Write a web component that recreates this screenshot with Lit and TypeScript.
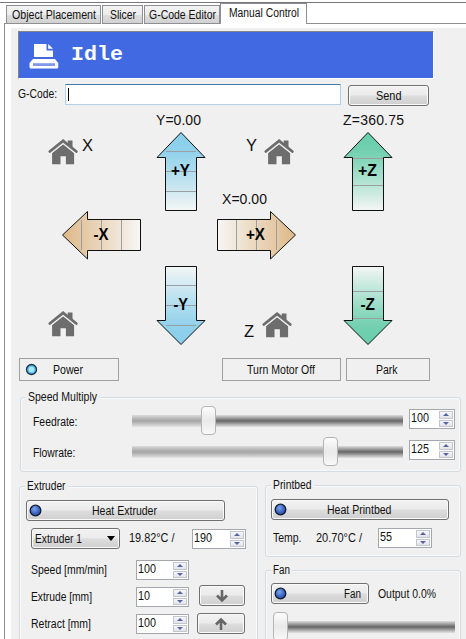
import { LitElement, html, css, svg } from "lit";
import { customElement, property } from "lit/decorators.js";
import { styleMap } from "lit/directives/style-map.js";

/** A one-line caption fitted to the given width. */
const label = (text: string, width: number, cls = "") => html`
  <svg class="label ${cls}" width=${width} height="14">
    <text x="0" y="11" textLength=${width} lengthAdjust="spacingAndGlyphs">${text}</text>
  </svg>`;

const labelStyles = css`
  .label { display: block; flex: none; overflow: visible; }
  .label text { font: 12px "Liberation Sans", Arial, sans-serif; fill: #111; }
`;

@customElement("spin-box")
class SpinBox extends LitElement {
  @property() value = "";
  @property({ type: Number }) textWidth = 18;
  static styles = [labelStyles, css`
    :host { display: flex; box-sizing: border-box; flex: none; height: 20px; width: 54px; border: 1px solid #a4a7ad; background: #fff; padding: 1px; justify-content: space-between; }
    .steps { display: flex; flex-direction: column; gap: 1px; width: 14px; }
    .step { flex: 1; border: 1px solid #c3c6cf; box-sizing: border-box; background: linear-gradient(#f7f7f9, #e2e3e8); display: flex; align-items: center; justify-content: center; }
    .step svg { display: block; }
  `];
  render() {
    return html`${label(this.value, this.textWidth)}
      <div class="steps">
        <div class="step"><svg width="6" height="3"><path d="M0 3L3 0L6 3Z" fill="#5563a0"/></svg></div>
        <div class="step"><svg width="6" height="3"><path d="M0 0L3 3L6 0Z" fill="#5563a0"/></svg></div>
      </div>`;
  }
}

@customElement("track-bar")
class TrackBar extends LitElement {
  @property({ type: Number }) pos = 0;
  static styles = css`
    :host { display: block; position: relative; height: 30px; flex: none; box-sizing: border-box; padding-top: 9px; }
    .track { height: 12px; background: linear-gradient(#dedede, #a0a0a0 25%, #686868 48%, #808080 60%, #b4b4b4 80%, #e2e2e2); }
    .done { height: 12px; background: linear-gradient(#dcdcdc, #bcbcbc 25%, #a6a6a6 48%, #b0b0b0 60%, #cacaca 80%, #e4e4e4); }
    .thumb { position: absolute; top: 0; width: 15px; height: 29px; box-sizing: border-box; border: 1px solid #b4b4b4; border-radius: 4px; background: linear-gradient(#fdfdfd, #e9e9e9 50%, #f8f8f8); }
  `;
  render() {
    return html`<div class="track"><div class="done" style=${styleMap({ width: `${this.pos}px` })}></div></div>
      <div class="thumb" style=${styleMap({ left: `${this.pos}px` })}></div>`;
  }
}

const led = html`<svg class="led" width="13" height="13"><defs><radialGradient id="g" cx=".4" cy=".35" r=".7"><stop offset="0" stop-color="#7ba4ea"/><stop offset=".6" stop-color="#3d68c0"/><stop offset="1" stop-color="#2b4a94"/></radialGradient></defs><circle cx="6.5" cy="6.5" r="5.3" fill="url(#g)" stroke="#111a33" stroke-width="1.3"/></svg>`;

const home = (x: number, y: number) => svg`
  <g transform="translate(${x} ${y})" class="home">
    <path d="M3.8 13.6L14.8 4.8L25.8 13.6V25H17.6V17H12.2V25H3.8Z"/>
    <path d="M1.5 12.2L14.8 1.6L28 12.2" class="eave"/>
    <path d="M19.4 1.2H24.2V9L19.4 5.4Z"/>
    <path d="M1.5 12.2L14.8 1.6L28 12.2" class="roof"/>
  </g>`;

const arrow = (d: string, fill: string, lines: string, text: string, x: number, y: number, w: number) => svg`
  <path d=${d} fill="url(#${fill})" stroke="#111"/>
  <path d=${lines} stroke="#999fa2" fill="none"/>
  <text class="dir" x=${x} y=${y} textLength=${w} lengthAdjust="spacingAndGlyphs">${text}</text>`;

@customElement("app-root")
class AppRoot extends LitElement {
  static styles = [labelStyles, css`
    :host { display: flex; flex-direction: column; width: 466px; height: 639px; overflow: hidden; background: #fff; box-sizing: border-box; padding-top: 2px; }
    * { box-sizing: border-box; }
    .tabs { display: flex; flex: none; align-items: flex-end; height: 22px; border-top: 1px solid #75757a; padding-left: 4px; }
    .tab { height: 19px; border: 1px solid #8d8f94; margin-right: 1px; background: linear-gradient(#f3f3f3 0, #ececec 50%, #dedede 52%, #d2d2d2); display: flex; justify-content: center; padding-top: 2px; }
    .t1 { width: 95px; } .t2 { width: 41px; } .t3 { width: 76px; margin-right: 0; }
    .tab.on { width: 87px; height: 21px; background: #fff; border-bottom: 0; margin: 0; }
    .lead { width: 2px; height: 1px; background: #8d8f94; }
    .rest { flex: 1; height: 1px; background: #8d8f94; }
    .body { flex: 1; margin-left: 4px; border-left: 1px solid #8d8f94; padding: 4px 0 0 6px; min-height: 0; }
    .panel { background: #f0f0f0; height: 100%; padding-top: 3px; display: flex; flex-direction: column; }
    .banner { flex: none; width: 416px; height: 48px; margin-left: 7px; border: 1px solid #858585; border-right-color: #fff; border-bottom-color: #fff; background: #4169e1; display: flex; padding: 11px 0 0 10px; }
    .banner svg { display: block; overflow: visible; }
    .idle { margin-left: 12px; }
    .idle text { font: bold 20px "Liberation Mono", "Courier New", monospace; fill: #fff; }
    .gcode { display: flex; flex: none; height: 29px; padding: 4px 0 0 7px; align-items: flex-start; }
    .gcode .cap { margin-top: 4px; }
    .input { width: 276px; height: 21px; margin: 1px 0 0 8px; background: #fff; border: 1px solid #b5cfe7; border-top-color: #3d7bad; padding: 3px 2px; border-radius: 1px; }
    .caret { width: 1px; height: 13px; background: #000; }
    .btn { display: flex; flex: none; align-items: center; justify-content: center; height: 21px; border: 1px solid #707070; border-radius: 3px; box-shadow: inset 0 0 0 1px #fafafa; background: linear-gradient(#f2f2f2, #ebebeb 48%, #dddddd 52%, #cfcfcf); }
    .send { width: 81px; margin: 2px 0 0 7px; }
    .pad { display: block; flex: none; }
    .home path { fill: #6d6d6d; }
    .home .eave { fill: none; stroke: #f0f0f0; stroke-width: 5.4; }
    .home .roof { fill: none; stroke: #6d6d6d; stroke-width: 2.8; stroke-linecap: round; }
    .coord { font: 14px "Liberation Sans", Arial, sans-serif; fill: #111; }
    .axis { font: 16.5px "Liberation Sans", Arial, sans-serif; fill: #111; }
    .dir { font: bold 16px "Liberation Sans", Arial, sans-serif; fill: #000; }
    .flats { display: flex; flex: none; padding-left: 8px; height: 39px; align-items: flex-start; }
    .flat { height: 23px; border: 1px solid #a0a0a0; display: flex; align-items: center; justify-content: center; }
    .power { width: 100px; justify-content: flex-start; padding-left: 3px; margin-right: 103px; }
    .power .label { margin-left: 15px; }
    .motor { width: 119px; margin-right: 5px; padding-right: 2px; }
    .park { width: 84px; padding-right: 2px; }
    .group { flex: none; border: 1px solid #d2dce3; border-radius: 3px; box-shadow: inset 0 0 0 1px #f9f9f9; }
    .legend { width: fit-content; background: #f0f0f0; margin: -8px 0 0 5px; padding: 0 2px; height: 14px; }
    .speed { width: 441px; height: 75px; margin-left: 9px; }
    .row { display: flex; align-items: flex-start; }
    .speed .row { height: 31px; padding: 2px 0 0 12px; }
    .speed .label { margin-top: 9px; }
    .speed .legend .label { margin-top: 0; }
    .speed .name { width: 99px; }
    .speed track-bar { width: 271px; margin-right: 6px; }
    .speed spin-box { width: 46px; margin-top: 3px; }
    .lower { display: flex; margin-top: 14px; padding-left: 8px; align-items: flex-start; }
    .ext { width: 239px; height: 180px; margin: 0 7px 0 0; }
    .side { margin-top: -1px; }
    .bed { width: 196px; height: 72px; }
    .fan { width: 196px; height: 100px; margin-top: 13px; }
    .wide { width: 199px; margin: 7px 0 0 6px; }
    .wide .label { margin-left: 50px; }
    .led { flex: none; margin-left: 2px; display: block; }
    .ledbtn { justify-content: flex-start; }
    .combo { width: 89px; justify-content: space-between; padding: 0 4px 0 3px; margin: 0 9px 0 11px; }
    .ext .r2 { padding-top: 7px; height: 39px; }
    .r2 .label { margin-top: 3px; }
    .r2 .combo .label { margin-top: 0; }
    .r2 spin-box { margin-left: 17px; margin-top: 1px; }
    .num { padding-left: 11px; height: 27px; }
    .num .name { width: 105px; padding-top: 3px; }
    .num .btn { width: 46px; margin: -2px 0 0 10px; }
    .num.last .btn { width: 48px; margin: -1px 0 0 8px; }
    .num spin-box { width: 53px; }
    .bed .wide { width: 178px; margin-left: 5px; }
    .bed .wide .label { margin-left: 40px; }
    .temp { padding: 7px 0 0 7px; }
    .temp .label { margin: 4px 14px 0 0; }
    .temp .label.mid { margin-right: 16px; }
    .temp spin-box { margin-top: 1px; }
    .fanbtn { width: 98px; margin: 6px 0 0 5px; }
    .fanbtn .label { margin-left: 57px; }
    .fanrow .out { margin: 10px 0 0 9px; }
    .fan track-bar { width: 182px; margin: 8px 0 0 7px; }
  `];

  render() {
    const up = (cx: number, y: number) => `M${cx} ${y}L${cx + 24} ${y + 25}H${cx + 15.5}V${y + 78}H${cx - 15.5}V${y + 25}H${cx - 24}Z`;
    const down = (cx: number, y: number) => `M${cx} ${y}L${cx + 24} ${y - 24}H${cx + 15.5}V${y - 78}H${cx - 15.5}V${y - 24}H${cx - 24}Z`;
    const deep = ["#87ceeb", "#66cdaa"];
    return html`
      <div class="tabs">
        <div class="lead"></div>
        <div class="tab t1">${label("Object Placement", 84)}</div>
        <div class="tab t2">${label("Slicer", 26)}</div>
        <div class="tab t3">${label("G-Code Editor", 67)}</div>
        <div class="tab on">${label("Manual Control", 70)}</div>
        <div class="rest"></div>
      </div>
      <div class="body"><div class="panel">
        <div class="banner">
          <svg width="30" height="26">
            <path d="M5 1H17.5V7.5H24V14H5Z" fill="#fff"/>
            <path d="M19.2 1L24 5.8H19.2Z" fill="#fff"/>
            <path d="M4 16H26L29.3 20V24Q29.3 25.5 27.8 25.5H2Q.5 25.5 .5 24V20Z" fill="#fff"/>
            <rect x="4" y="20.2" width="22" height="2.8" fill="#7f99ea"/>
          </svg>
          <svg class="idle" width="52" height="26"><text x="0" y="17" textLength="52" lengthAdjust="spacingAndGlyphs">Idle</text></svg>
        </div>
        <div class="gcode">${label("G-Code:", 39, "cap")}
          <div class="input"><div class="caret"></div></div>
          <div class="btn send">${label("Send", 25.5)}</div>
        </div>
        <svg class="pad" width="455" height="250" viewBox="11 108 455 250">
          <defs>
            ${["y", "z"].map((k, i) => svg`
              <linearGradient id="${k}u" x1="0" y1="0" x2="0" y2="1"><stop offset="0" stop-color=${deep[i]}/><stop offset=".25" stop-color=${deep[i]} stop-opacity=".9"/><stop offset="1" stop-color="#f4f6f6"/></linearGradient>
              <linearGradient id="${k}d" x1="0" y1="1" x2="0" y2="0"><stop offset="0" stop-color=${deep[i]}/><stop offset=".25" stop-color=${deep[i]} stop-opacity=".9"/><stop offset="1" stop-color="#f4f6f6"/></linearGradient>`)}
            <linearGradient id="xl" x1="0" x2="1"><stop offset="0" stop-color="#deb887"/><stop offset="1" stop-color="#f7f6f4"/></linearGradient>
            <linearGradient id="xr" x1="1" x2="0"><stop offset="0" stop-color="#deb887"/><stop offset="1" stop-color="#f7f6f4"/></linearGradient>
          </defs>
          ${home(48.3, 139.3)}${home(264.3, 139.3)}${home(48.3, 311.3)}${home(262.3, 312.3)}
          <text class="axis" x="82" y="151">X</text>
          <text class="axis" x="246" y="151">Y</text>
          <text class="axis" x="244" y="337">Z</text>
          <text class="coord" x="156" y="125" textLength="45">Y=0.00</text>
          <text class="coord" x="222" y="204" textLength="45">X=0.00</text>
          <text class="coord" x="343" y="125" textLength="61">Z=360.75</text>
          ${arrow(up(181, 132.5), "yu", "M166 151.5H196M166 171.5H196M166 191.5H196", "+Y", 171, 176, 19)}
          ${arrow(down(181, 344.5), "yd", "M166 285.5H196M166 305.5H196M166 325.5H196", "-Y", 173.5, 310, 14.5)}
          ${arrow(up(368, 132.5), "zu", "M353 158.5H383M353 185.5H383", "+Z", 358, 176, 19)}
          ${arrow(down(368, 344.5), "zd", "M353 291.5H383M353 318.5H383", "-Z", 360.5, 310, 14.5)}
          ${arrow("M62.5 235L87.5 211.5V219.5H140.5V250.5H87.5V259Z", "xl", "M81.5 220V250M101.5 220V250M121.5 220V250", "-X", 93.5, 240, 15)}
          ${arrow("M295.5 235L270.5 211.5V219.5H217.5V250.5H270.5V259Z", "xr", "M236.5 220V250M256.5 220V250M276.5 220V250", "+X", 246, 240, 19)}
        </svg>
        <div class="flats">
          <div class="flat power">
            <svg class="led" width="13" height="13"><circle cx="6.5" cy="6.5" r="5" fill="#4cb8ee" stroke="#20324a" stroke-width="1.3"/><circle cx="6.5" cy="6.5" r="2.9" fill="#a4e8ff"/></svg>
            ${label("Power", 30)}
          </div>
          <div class="flat motor">${label("Turn Motor Off", 68)}</div>
          <div class="flat park">${label("Park", 21.5)}</div>
        </div>
        <div class="group speed">
          <div class="legend">${label("Speed Multiply", 69)}</div>
          <div class="row"><div class="name">${label("Feedrate:", 44.5)}</div><track-bar pos="69"></track-bar><spin-box value="100"></spin-box></div>
          <div class="row"><div class="name">${label("Flowrate:", 42.5)}</div><track-bar pos="191"></track-bar><spin-box value="125"></spin-box></div>
        </div>
        <div class="lower">
          <div class="group ext">
            <div class="legend">${label("Extruder", 38.5)}</div>
            <div class="btn ledbtn wide">${led}${label("Heat Extruder", 65)}</div>
            <div class="row r2">
              <div class="btn combo">${label("Extruder 1", 47)}<svg width="8" height="5"><path d="M0 0H8L4 5Z"/></svg></div>
              ${label("19.82°C /", 45.5)}
              <spin-box value="190"></spin-box>
            </div>
            <div class="row num"><div class="name">${label("Speed [mm/min]", 76)}</div><spin-box value="100"></spin-box></div>
            <div class="row num"><div class="name">${label("Extrude [mm]", 61)}</div><spin-box value="10" textWidth="12"></spin-box>
              <div class="btn"><svg width="14" height="14"><path d="M7 1V11M2 6.5L7 11.5L12 6.5" fill="none" stroke="#666" stroke-width="2.6"/></svg></div></div>
            <div class="row num last"><div class="name">${label("Retract [mm]", 60)}</div><spin-box value="100"></spin-box>
              <div class="btn"><svg width="14" height="14"><path d="M7 13V3M2 7.5L7 2.5L12 7.5" fill="none" stroke="#666" stroke-width="2.6"/></svg></div></div>
          </div>
          <div class="side">
            <div class="group bed">
              <div class="legend">${label("Printbed", 38.5)}</div>
              <div class="btn ledbtn wide">${led}${label("Heat Printbed", 64.5)}</div>
              <div class="row temp">${label("Temp.", 28.5)}${label("20.70°C /", 46, "mid")}<spin-box value="55" textWidth="12"></spin-box></div>
            </div>
            <div class="group fan">
              <div class="legend">${label("Fan", 17)}</div>
              <div class="row fanrow">
                <div class="btn ledbtn fanbtn">${led}${label("Fan", 17)}</div>
                <div class="out">${label("Output 0.0%", 58)}</div>
              </div>
              <track-bar pos="0"></track-bar>
            </div>
          </div>
        </div>
      </div></div>`;
  }
}
